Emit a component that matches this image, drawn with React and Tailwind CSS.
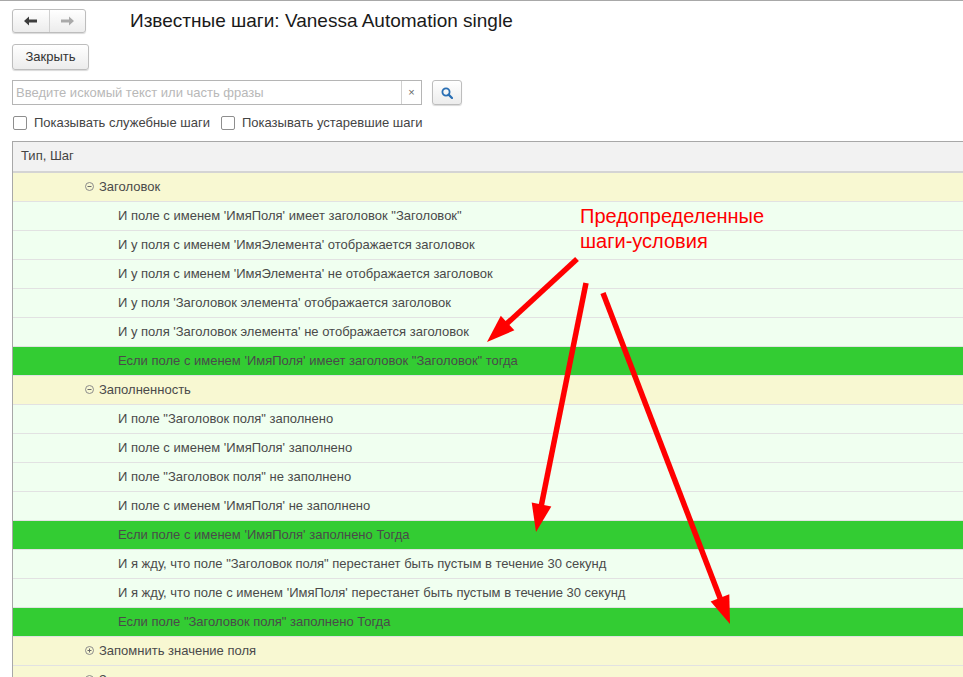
import React from "react";

const rows = [
  { type: "group", text: "Заголовок", open: true },
  { type: "leaf", text: "И поле с именем 'ИмяПоля' имеет заголовок \"Заголовок\"" },
  { type: "leaf", text: "И у поля с именем 'ИмяЭлемента' отображается заголовок" },
  { type: "leaf", text: "И у поля с именем 'ИмяЭлемента' не отображается заголовок" },
  { type: "leaf", text: "И у поля 'Заголовок элемента' отображается заголовок" },
  { type: "leaf", text: "И у поля 'Заголовок элемента' не отображается заголовок" },
  { type: "cond", text: "Если поле с именем 'ИмяПоля' имеет заголовок \"Заголовок\" тогда" },
  { type: "group", text: "Заполненность", open: true },
  { type: "leaf", text: "И поле \"Заголовок поля\" заполнено" },
  { type: "leaf", text: "И поле с именем 'ИмяПоля' заполнено" },
  { type: "leaf", text: "И поле \"Заголовок поля\" не заполнено" },
  { type: "leaf", text: "И поле с именем 'ИмяПоля' не заполнено" },
  { type: "cond", text: "Если поле с именем 'ИмяПоля' заполнено Тогда" },
  { type: "leaf", text: "И я жду, что поле \"Заголовок поля\" перестанет быть пустым в течение 30 секунд" },
  { type: "leaf", text: "И я жду, что поле с именем 'ИмяПоля' перестанет быть пустым в течение 30 секунд" },
  { type: "cond", text: "Если поле \"Заголовок поля\" заполнено Тогда" },
  { type: "group", text: "Запомнить значение поля", open: false },
  { type: "group", text: "Значение", open: false },
];

function TreeIcon({ open }) {
  return (
    <svg width="9" height="9" viewBox="0 0 9 9" className="shrink-0">
      <circle cx="4.5" cy="4.5" r="4" fill="none" stroke="#8a8a8a" strokeWidth="1" />
      <line x1="2.5" y1="4.5" x2="6.5" y2="4.5" stroke="#6a6a6a" strokeWidth="1" />
      {!open && <line x1="4.5" y1="2.5" x2="4.5" y2="6.5" stroke="#6a6a6a" strokeWidth="1" />}
    </svg>
  );
}

function Row({ row }) {
  const bg =
    row.type === "group" ? "bg-[#f8f8d2]" : row.type === "cond" ? "bg-[#33cc33]" : "bg-[#f0fff0]";
  return (
    <div className={`h-[29px] flex items-center border-b border-[#e2e2e2] ${bg}`}>
      {row.type === "group" ? (
        <div className="flex items-center pl-[72px] gap-[5px]">
          <TreeIcon open={row.open} />
          <span>{row.text}</span>
        </div>
      ) : (
        <span className="pl-[105px]">{row.text}</span>
      )}
    </div>
  );
}

function Arrow({ x1, y1, x2, y2 }) {
  const dx = x2 - x1;
  const dy = y2 - y1;
  const len = Math.hypot(dx, dy);
  const ux = dx / len;
  const uy = dy / len;
  const hl = 28;
  const hw = 10;
  const bx = x2 - ux * hl;
  const by = y2 - uy * hl;
  const p1 = `${bx - uy * hw},${by + ux * hw}`;
  const p2 = `${bx + uy * hw},${by - ux * hw}`;
  return (
    <g>
      <line x1={x1} y1={y1} x2={bx + ux * 2} y2={by + uy * 2} stroke="#ff0000" strokeWidth="5.5" />
      <polygon points={`${x2},${y2} ${p1} ${p2}`} fill="#ff0000" />
    </g>
  );
}

export default function App() {
  return (
    <div
      className="relative w-[963px] h-[677px] overflow-hidden bg-white text-[13px] text-[#4a4a4a]"
      style={{ fontFamily: '"Liberation Sans", Arial, sans-serif' }}
    >
      <div className="h-px bg-[#a8a8a8]" />

      {/* header */}
      <div className="flex items-center pt-[8px] pl-[12px]">
        <div className="flex h-[24px] w-[74px] rounded-[3px] border border-[#bdbdbd] bg-gradient-to-b from-white to-[#ececec] shadow-[0_1px_1px_rgba(0,0,0,0.15)]">
          <div className="flex-1 flex items-center justify-center border-r border-[#d0d0d0]">
            <svg width="14" height="10" viewBox="0 0 14 10">
              <path d="M0 5 L5 0.5 L5 3.5 L13 3.5 L13 6.5 L5 6.5 L5 9.5 Z" fill="#3c3c3c" />
            </svg>
          </div>
          <div className="flex-1 flex items-center justify-center">
            <svg width="14" height="10" viewBox="0 0 14 10">
              <path d="M14 5 L9 0.5 L9 3.5 L1 3.5 L1 6.5 L9 6.5 L9 9.5 Z" fill="#a9a9a9" />
            </svg>
          </div>
        </div>
        <div className="ml-[44px] text-[19px] leading-[24px] text-[#1a1a1a]">Известные шаги: Vanessa Automation single</div>
      </div>

      <div className="pl-[12px] pt-[11px]">
        <button className="h-[26px] w-[77px] rounded-[3px] border border-[#bdbdbd] bg-gradient-to-b from-white to-[#ececec] shadow-[0_1px_1px_rgba(0,0,0,0.15)] text-[13px] text-[#333]">
          Закрыть
        </button>
      </div>

      {/* search */}
      <div className="flex items-center pl-[12px] pt-[10px]">
        <div className="flex h-[25px] w-[410px] border border-[#b5b5b5] bg-white">
          <div className="flex-1 flex items-center pl-[3px] text-[#b8b8b8]">Введите искомый текст или часть фразы</div>
          <div className="w-[20px] flex items-center justify-center border-l border-[#d0d0d0] text-[11px] text-[#666]">×</div>
        </div>
        <div className="ml-[10px] h-[25px] w-[30px] flex items-center justify-center rounded-[3px] border border-[#bdbdbd] bg-gradient-to-b from-white to-[#ececec] shadow-[0_1px_1px_rgba(0,0,0,0.15)]">
          <svg width="12" height="12" viewBox="0 0 12 12">
            <circle cx="5" cy="5" r="3.6" fill="none" stroke="#2a6fb4" strokeWidth="1.8" />
            <line x1="7.6" y1="7.6" x2="11" y2="11" stroke="#2a6fb4" strokeWidth="2.2" strokeLinecap="round" />
          </svg>
        </div>
      </div>

      <div className="flex items-center pl-[13px] pt-[8px] gap-[7px] text-[#444]">
        <div className="flex items-center gap-[7px]">
          <div className="w-[14px] h-[14px] rounded-[2px] border border-[#8e8e8e] bg-white" />
          <span>Показывать служебные шаги</span>
        </div>
        <div className="flex items-center gap-[7px] ml-[4px]">
          <div className="w-[14px] h-[14px] rounded-[2px] border border-[#8e8e8e] bg-white" />
          <span>Показывать устаревшие шаги</span>
        </div>
      </div>

      {/* table */}
      <div className="ml-[12px] mt-[8px] border-l border-t border-[#a8a8a8]">
        <div className="h-[31px] flex items-center pl-[8px] bg-[#f2f2f2] border-b-2 border-[#d4d4d4] text-[#444]">
          Тип, Шаг
        </div>
        {rows.map((r, i) => (
          <Row key={i} row={r} />
        ))}
      </div>

      {/* annotation */}
      <div className="absolute left-[580px] top-[204px] text-[20px] leading-[25px] text-[#ff0000]">
        Предопределенные
        <br />
        шаги-условия
      </div>
      <svg className="absolute left-0 top-0 pointer-events-none" width="963" height="677">
        <Arrow x1={577} y1={259} x2={487} y2={342} />
        <Arrow x1={586} y1={283} x2={536} y2={532} />
        <Arrow x1={603} y1={293} x2={730} y2={624} />
      </svg>
    </div>
  );
}
